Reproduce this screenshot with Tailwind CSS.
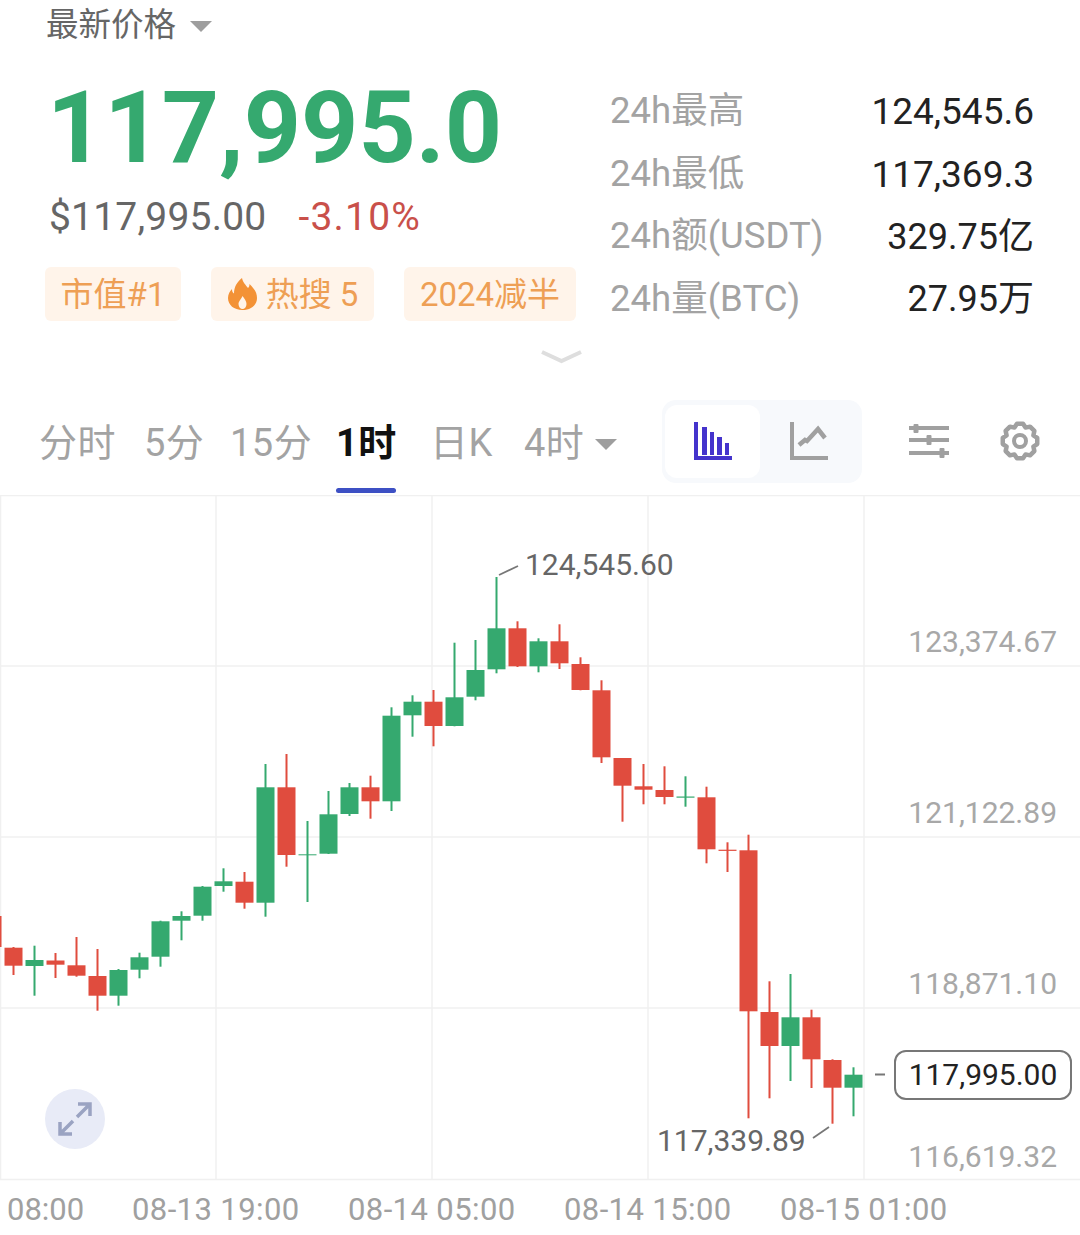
<!DOCTYPE html>
<html lang="en">
<head>
    <meta charset="UTF-8">
    <title>BTC</title>
    <script src="https://cdn.jsdelivr.net/npm/@tailwindcss/browser@4"></script>
</head>
<body class="bg-white w-[1080px] h-[1235px] overflow-hidden font-[Roboto,'Noto_Sans_CJK_SC',sans-serif]">
    <!-- Price header -->
    <div class="h-[50px] pl-[46px] flex items-center gap-[14px]">
        <span class="text-[32.500px] leading-none text-[#666666]">最新价格</span>
        <span class="mt-[3px] w-0 h-0 border-x-[11px] border-x-transparent border-t-[11px] border-t-[#9e9e9e]"></span>
    </div>
    <div class="mt-[30px] flex">
        <div class="w-[590px] pl-[45px]">
            <div class="pl-[2px] pt-[3px] h-[92px] flex items-center text-[100px] leading-none font-bold text-[#35a96f]">117,995.0</div>
            <div class="pl-[4px] mt-[23px] h-[44px] flex items-center text-[39px] leading-none">
                <span class="tracking-[0.200px] text-[#666666]">$117,995.00</span>
                <span class="ml-[32px] tracking-[1.200px] text-[#c9504a]">-3.10%</span>
            </div>
            <div class="mt-[28px] flex gap-[30px] text-[33px] leading-none text-[#ee9f55]">
                <div class="h-[54px] w-[136px] rounded-md bg-[#fff4ea] flex items-center justify-center">市值#1</div>
                <div class="h-[54px] w-[163px] rounded-md bg-[#fff4ea] flex items-center justify-center gap-[8px]">
                    <svg class="w-[31px] h-[32px]" viewBox="0 0 31 32">
                        <path d="M15 0c1 5 4 7 6 10 1-1 1.500-2 1.500-4 4 4 7.500 8 7.500 14 0 7-6 12-14.500 12S1 27 1 20c0-4 2-7 4-9 0 2 .5 3.500 2 4.500C7 9 10 4 15 0z" fill="#f39236"/>
                        <path d="M15.500 18c2 3 4 5 4 8 0 3-2 5-4 5s-4-2-4-5c0-3 3-5 4-8z" fill="#fff4ea"/>
                    </svg>
                    <span>热搜 5</span>
                </div>
                <div class="h-[54px] w-[172px] rounded-md bg-[#fff4ea] flex items-center justify-center">2024减半</div>
            </div>
        </div>
        <div class="pl-[20px] w-[490px] pr-[46px]">
            <div class="h-[62.7px] flex items-center justify-between">
                <span class="text-[36.500px] leading-none text-[#a3a3a3]">24h最高</span>
                <span class="text-[37px] leading-none text-[#222222]">124,545.6</span>
            </div>
            <div class="h-[62.7px] flex items-center justify-between">
                <span class="text-[36.500px] leading-none text-[#a3a3a3]">24h最低</span>
                <span class="text-[37px] leading-none text-[#222222]">117,369.3</span>
            </div>
            <div class="h-[62.7px] flex items-center justify-between">
                <span class="text-[36.500px] leading-none text-[#a3a3a3]">24h额(USDT)</span>
                <span class="text-[36px] leading-none text-[#222222]">329.75亿</span>
            </div>
            <div class="h-[62.7px] flex items-center justify-between">
                <span class="text-[36.500px] leading-none text-[#a3a3a3]">24h量(BTC)</span>
                <span class="text-[36px] leading-none text-[#222222]">27.95万</span>
            </div>
        </div>
    </div>
    <!-- Expand chevron -->
    <div class="h-[69px] pt-[19px] pl-[541px]">
        <svg class="w-[41px] h-[14px]" viewBox="0 0 41 14"><path d="M1 2l19.500 9L40 2" fill="none" stroke="#dedede" stroke-width="4"/></svg>
    </div>
    <!-- Interval tabs -->
    <div class="h-[95px] pl-[39px] flex items-start text-[38px] leading-none tracking-[0.500px] text-[#a3a3a3]">
        <span class="mt-[24px] w-[76px] whitespace-nowrap">分时</span>
        <span class="mt-[24px] ml-[29px] w-[59px] whitespace-nowrap">5分</span>
        <span class="mt-[24px] ml-[27px] w-[79px] whitespace-nowrap">15分</span>
        <div class="relative mt-[24px] ml-[27px] w-[59px] h-[71px] font-bold text-[#111111] whitespace-nowrap">
            <span>1时</span>
            <span class="absolute left-0 bottom-[2px] w-[60px] h-[5px] rounded-full bg-[#3d50c4]"></span>
        </div>
        <span class="mt-[24px] ml-[35px] w-[65px] whitespace-nowrap">日K</span>
        <span class="mt-[24px] ml-[29px] w-[58px] whitespace-nowrap">4时</span>
        <span class="mt-[39px] ml-[13px] w-0 h-0 border-x-[11px] border-x-transparent border-t-[11px] border-t-[#9e9e9e]"></span>
        <div class="ml-[45px] w-[200px] h-[83px] rounded-[14px] bg-[#f7f9fc] p-[5px] pl-[3px] flex">
            <div class="w-[95px] h-[73px] rounded-[12px] bg-white flex items-center justify-center">
                <svg class="w-[38px] h-[38px]" viewBox="0 0 38 38" fill="#4433cc">
                    <path d="M0 0h4v34h34v4H0z"/>
                    <path d="M8 5h5v28H8zM16 10h4v23h-4zM23 15h5v18h-5zM31 21h4v12h-4z"/>
                </svg>
            </div>
            <div class="flex-1 flex items-center justify-center">
                <svg class="w-[38px] h-[38px]" viewBox="0 0 38 38">
                    <path d="M2 0v36h36" fill="none" stroke="#a0a0a0" stroke-width="4"/>
                    <path d="M9 23l6-5 2 1 11-12 7 9" fill="none" stroke="#a0a0a0" stroke-width="4.500"/>
                </svg>
            </div>
        </div>
        <svg class="mt-[24px] ml-[47px] w-[40px] h-[34px]" viewBox="0 0 40 34" fill="#a0a0a0">
            <path d="M0 2h40v4H0zM0 14h40v4H0zM0 27h40v4H0z"/>
            <rect x="4.500" y="0" width="5" height="9" rx="1"/>
            <rect x="17.500" y="11" width="5" height="10" rx="1"/>
            <rect x="30.500" y="24" width="5" height="10" rx="1"/>
        </svg>
        <svg class="mt-[21px] ml-[51px] w-[40px] h-[40px]" viewBox="0 0 40 40" fill="none" stroke="#a0a0a0" stroke-linejoin="round">
            <path stroke-width="4.500" d="M16.960 2.770L23.040 2.770 25.550 6.600 30.040 5.660 34.340 9.960 33.400 14.450 37.230 16.960 37.230 23.040 33.400 25.550 34.340 30.040 30.040 34.340 25.550 33.400 23.040 37.230 16.960 37.230 14.450 33.400 9.960 34.340 5.660 30.040 6.600 25.550 2.770 23.040 2.770 16.960 6.600 14.450 5.660 9.960 9.960 5.660 14.450 6.600z"/>
            <circle cx="20" cy="20" r="6" stroke-width="4"/>
        </svg>
    </div>
    <!-- Chart canvas -->
    <div class="relative h-[740px]">
        <svg id="chart" class="absolute left-0 top-0" width="1080" height="700" viewBox="0 495 1080 700"></svg>
        <span class="absolute left-[525px] top-[54px] text-[30px] leading-[32px] text-[#666666]">124,545.60</span>
        <span class="absolute right-[23px] top-[131px] text-[30px] leading-[32px] text-[#a8a8a8]">123,374.67</span>
        <span class="absolute right-[23px] top-[302px] text-[30px] leading-[32px] text-[#a8a8a8]">121,122.89</span>
        <span class="absolute right-[23px] top-[473px] text-[30px] leading-[32px] text-[#a8a8a8]">118,871.10</span>
        <span class="absolute right-[23px] top-[646px] text-[30px] leading-[32px] text-[#a8a8a8]">116,619.32</span>
        <span class="absolute left-[657px] top-[630px] text-[30px] leading-[32px] text-[#666666]">117,339.89</span>
        <div class="absolute left-[894px] top-[555px] w-[178px] h-[50px] rounded-[12px] border-2 border-[#777777] bg-white flex items-center justify-center text-[30px] leading-none text-[#222222]">117,995.00</div>
        <div class="absolute left-[45px] top-[594px] w-[60px] h-[60px] rounded-full bg-[#e8ebf7] flex items-center justify-center">
            <svg class="w-[34px] h-[34px]" viewBox="0 0 34 34" fill="none" stroke="#9aa3c2" stroke-width="3.500">
                <path d="M19 15L32 2M20 2h12v12M15 19L2 32M2 20v12h12"/>
            </svg>
        </div>
        <!-- Time axis -->
        <div class="absolute left-0 top-[699px] w-full h-[32px] text-[31px] leading-[32px] text-[#a0a0a0]">
            <span class="absolute left-[7px]">08:00</span>
            <span class="absolute left-[132px] tracking-[0.400px]">08-13 19:00</span>
            <span class="absolute left-[348px] tracking-[0.400px]">08-14 05:00</span>
            <span class="absolute left-[564px] tracking-[0.400px]">08-14 15:00</span>
            <span class="absolute left-[780px] tracking-[0.400px]">08-15 01:00</span>
        </div>
    </div>

    <script>
        // [center x, body top, body bottom, wick top, wick bottom, up?]
        const candles = [
            [-7.5, 916, 947, 916, 947, 0],
            [13.5, 947.7, 965.7, 947, 975, 0],
            [34.5, 960, 966, 945.7, 995.7, 1],
            [55.5, 960.5, 964.7, 953, 978, 0],
            [76.5, 965.3, 975.7, 937, 976.7, 0],
            [97.5, 976, 995.7, 949, 1010.7, 0],
            [118.5, 970, 995.7, 969, 1005.7, 1],
            [139.5, 957.3, 969.7, 952.7, 978.3, 1],
            [160.5, 921.3, 956.7, 920.7, 966.7, 1],
            [181.5, 916, 920.7, 911.3, 940.3, 1],
            [202.5, 886.7, 915.7, 886, 920.7, 1],
            [223.5, 881.3, 886, 868.3, 891.7, 1],
            [244.5, 881.7, 902.7, 872, 908.7, 0],
            [265.5, 787.3, 902.7, 764, 916.7, 1],
            [286.5, 787.3, 855, 754, 866.7, 0],
            [307.5, 854.3, 855.3, 821, 902, 1],
            [328.5, 814.3, 853.7, 791, 854, 1],
            [349.5, 787.3, 814, 783, 816, 1],
            [370.5, 787.3, 801.3, 775.7, 818.7, 0],
            [391.5, 715.7, 801.3, 707.3, 811, 1],
            [412.5, 701.7, 715.3, 695.3, 736.7, 1],
            [433.5, 701.7, 726, 690, 746.3, 0],
            [454.5, 697.3, 726, 642.7, 726.3, 1],
            [475.5, 670, 696.7, 640, 700.3, 1],
            [496.5, 628.3, 669.3, 577, 673.3, 1],
            [517.5, 628.3, 666.3, 621.3, 667, 0],
            [538.5, 641.3, 666.3, 638.3, 672.3, 1],
            [559.5, 641.3, 663.3, 624.3, 669, 0],
            [580.5, 664, 690, 657.3, 690.3, 0],
            [601.5, 690.3, 757.3, 680.3, 763, 0],
            [622.5, 758, 785.7, 758, 821.7, 0],
            [643.5, 786.3, 789.7, 764, 804.3, 0],
            [664.5, 790, 797, 766.3, 804.3, 0],
            [685.5, 796.5, 797.7, 776.3, 806.7, 1],
            [706.5, 797.3, 849.3, 786.7, 863.3, 0],
            [727.5, 849.7, 850.9, 842.3, 872, 0],
            [748.5, 850.3, 1011.3, 834.7, 1118.3, 0],
            [769.5, 1012, 1046, 981.3, 1098.3, 0],
            [790.5, 1017.3, 1046, 974, 1081, 1],
            [811.5, 1017.3, 1059.3, 1009.7, 1088, 0],
            [832.5, 1060, 1087.7, 1059.3, 1123.7, 0],
            [853.5, 1074.7, 1087.7, 1067.3, 1116.3, 1]
        ];
        const grid = [[0, 495.5, 1080, 495.5], [0, 666, 1080, 666], [0, 837, 1080, 837], [0, 1008, 1080, 1008], [0, 1179.5, 1080, 1179.5],
            [0.5, 495, 0.5, 1179], [216, 495, 216, 1179], [432, 495, 432, 1179], [648, 495, 648, 1179], [864, 495, 864, 1179]];

        let out = '';
        grid.forEach(g => {
            out += `<line x1="${g[0]}" y1="${g[1]}" x2="${g[2]}" y2="${g[3]}" stroke="#f0f0f0" stroke-width="1.500"/>`;
        });
        candles.forEach(c => {
            const color = c[5] ? '#35a96f' : '#e04c3e';
            out += `<rect x="${c[0] - 1}" y="${c[3]}" width="2" height="${c[4] - c[3]}" fill="${color}"/>`;
            out += `<rect x="${c[0] - 9}" y="${c[1]}" width="18" height="${c[2] - c[1]}" fill="${color}"/>`;
        });
        // leader lines to the high, low and last price labels
        out += '<path d="M499 575L518 566M813 1138L829 1127M875 1074.500H885" fill="none" stroke="#777777" stroke-width="1.800"/>';
        document.getElementById('chart').innerHTML = out;
    </script>
</body>
</html>
